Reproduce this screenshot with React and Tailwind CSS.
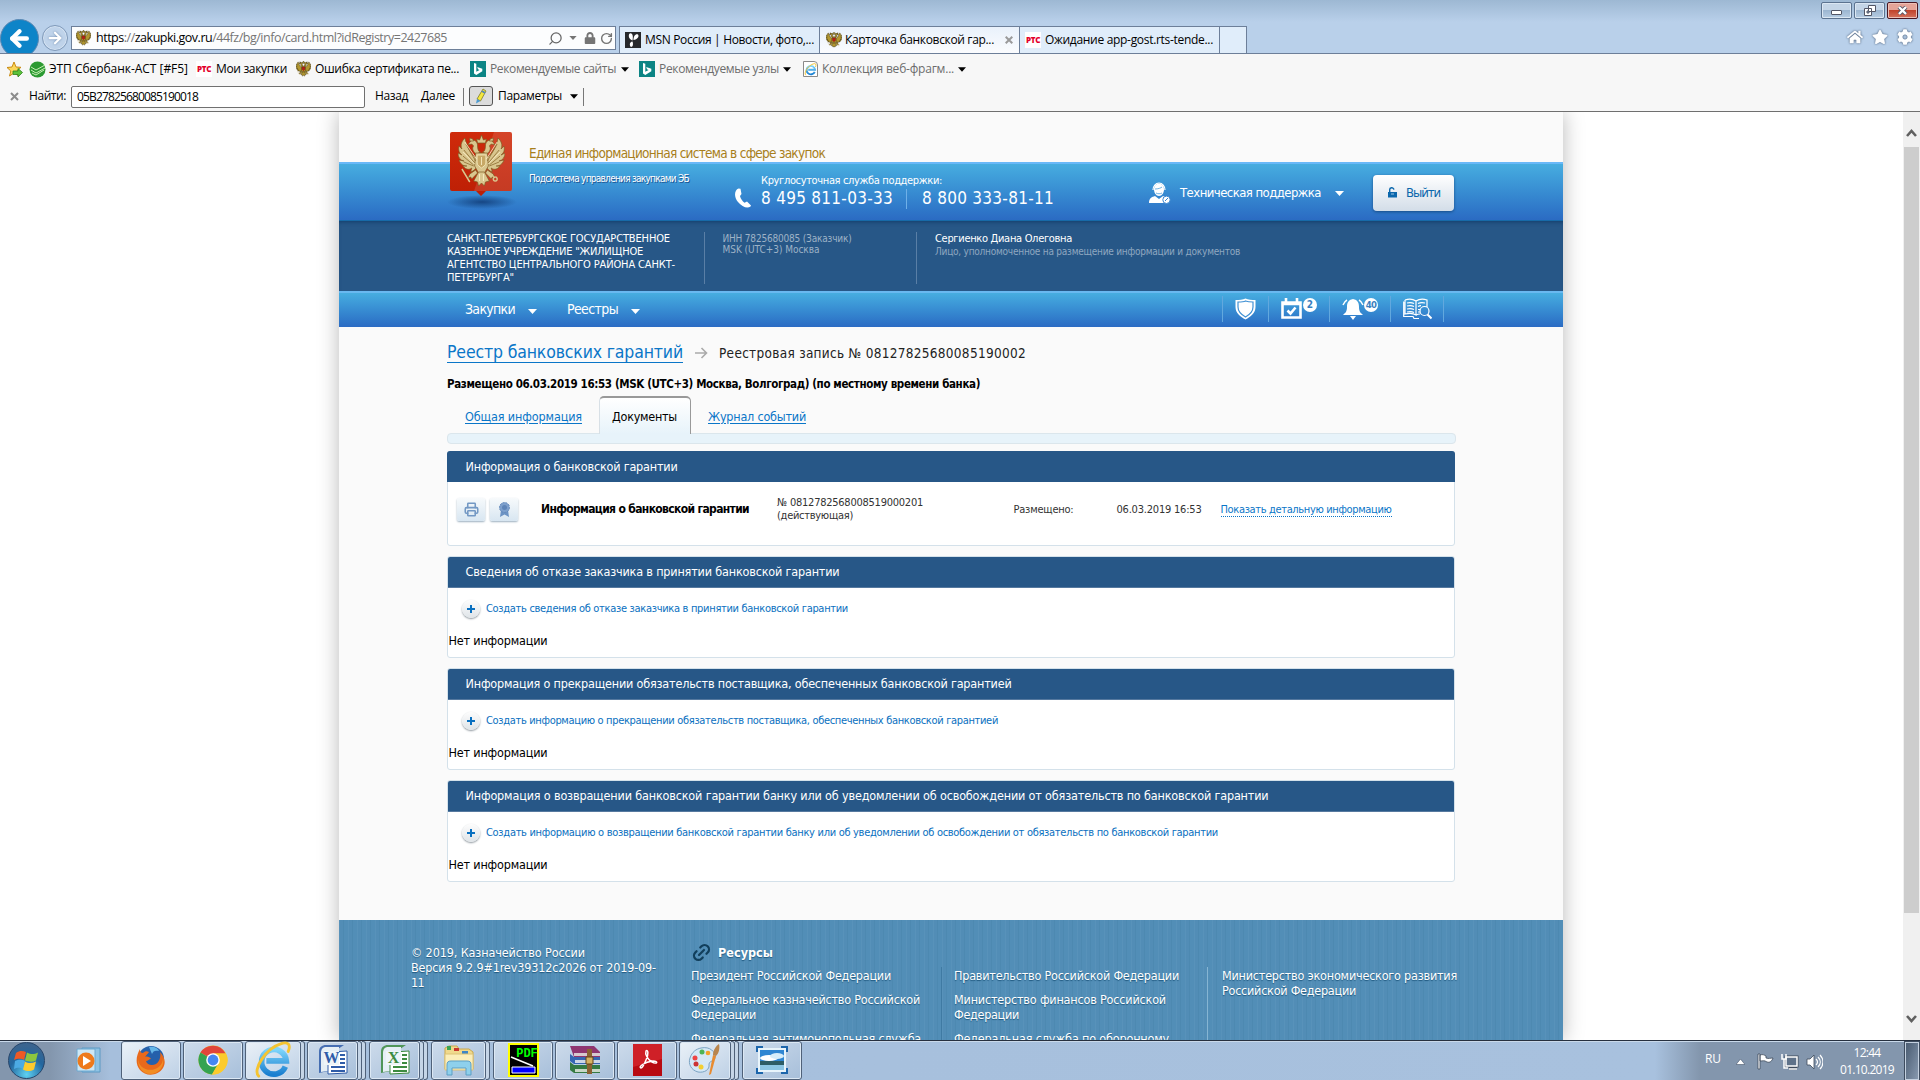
import { useLayoutEffect, useRef } from "react";
import { ArrowLeft, ArrowRight, Link2, Printer, RotateCw, Search } from "lucide-react";
import { FaCog, FaHome, FaStar, FaLock } from "react-icons/fa";

// One line of text, tracked so that it takes exactly w pixels
function T({ w, className = "", children }) {
  const ref = useRef(null);
  useLayoutEffect(() => {
    const el = ref.current;
    el.style.letterSpacing = "0px";
    const natural = el.getBoundingClientRect().width;
    el.style.letterSpacing = `${(w - natural) / el.textContent.length}px`;
  }, [w]);
  return (
    <span className={`block shrink-0 whitespace-nowrap ${className}`} style={{ width: w }}>
      <span ref={ref} className="inline-block">{children}</span>
    </span>
  );
}

function Caret({ className = "" }) {
  return <svg className={`shrink-0 ${className}`} width="9" height="5" viewBox="0 0 9 5" fill="currentColor"><path d="M0 0h9L4.500 5z" /></svg>;
}

const WING = "M20 24C15 21 10 15 7 3 4 6 2 10 4 14L1 11C0 15 1 18 4 20L0 18C0 22 2 25 6 26L1 25C3 30 6 31 9 31L5 31C8 35 12 35 14 33L13 37C16 36 18 34 20 31z";
const HEAD = "M23 17C21 17 20 14 20 11 20 6 16 4 13 6L10 10 14 9 16 11C14 13 15 17 19 19z";

function Eagle({ width = 15, height = 16, className = "" }) {
  const small = width < 20;
  return (
    <svg width={width} height={height} viewBox="0 0 48 54" preserveAspectRatio="none" className={`shrink-0 ${className}`}>
      <g fill={small ? "#b3982f" : "#d9c68e"} stroke={small ? "#4b3c10" : "#7d5a22"} strokeWidth={small ? 1.6 : 0.7} strokeLinejoin="round">
        <path d={WING} />
        <path d={WING} transform="matrix(-1 0 0 1 48 0)" />
        <path d={HEAD} />
        <path d={HEAD} transform="matrix(-1 0 0 1 48 0)" />
        <path d="M18 18h12l1 13-4 7h-6l-4-7z" />
        <path d="M21 37l-5 9 4 1 1 4 3-3 3 3 1-4 4-1-5-9z" />
        <path d="M18 35l-6 4-2 4 3-1 1 2 6-6zM30 35l6 4 2 4-3-1-1 2-6-6z" />
        <path d="M20 8l-1-4 3 1 2-5 2 5 3-1-1 4zM12 6l0-3 3 1 1 2zM36 6l0-3-3 1-1 2z" />
        <path d="M4 34l8 13M38 42a2 2 0 1 0 .1 0" fill="none" strokeWidth="1.500" stroke="#d9c68e" />
      </g>
      <path d="M19.500 20h9v8c0 2-3 4-4.500 5-1.500-1-4.500-3-4.500-5z" fill={small ? "#b3201a" : "#c7a866"} stroke={small ? "#7d120e" : "#f0e3b4"} />
      {!small && (
        <g fill="none" strokeWidth=".8">
          <path d="M8 9l10 17M6 15l11 13M5 21l11 9M6 27l10 4M40 9L30 26M42 15L31 28M43 21l-11 9M42 27l-10 4" stroke="#8b6a2f" />
          <path d="M7 7l12 17M5 17l12 12M40 7L29 24M43 17L31 29M22 39v7M26 39v7M24 22v8" stroke="#fff4cd" />
        </g>
      )}
    </svg>
  );
}

function Rts() {
  return <span className="flex h-4 w-4 shrink-0 items-center justify-center bg-white text-[8px] font-extrabold leading-none tracking-[-0.3px] text-[#e4002b]">РТС</span>;
}

function Bing() {
  return (
    <svg width="16" height="16" viewBox="0 0 16 16" className="shrink-0">
      <path d="M0 0h16v16H0z" fill="#0c8484" />
      <path d="M4 2l2.300.8v8L9.600 9 8 8.200 7.200 6 12.300 7.800v2.500L6.300 14 4 12.500z" fill="#fff" />
    </svg>
  );
}

function IELogo({ size }) {
  return (
    <svg width={size} height={size} viewBox="0 0 40 40" className="shrink-0">
      <defs>
        <linearGradient id="ie" x1="0" y1="0" x2="0" y2="1"><stop offset="0" stopColor="#7fd6fb" /><stop offset="1" stopColor="#1a7fd0" /></linearGradient>
      </defs>
      <path d="M33 27a13 13 0 1 1 1-6H13" fill="none" stroke="url(#ie)" strokeWidth="6" />
      <path d="M5 37C-2 31 12 8 28 3c8-3 11 1 8 8" fill="none" stroke="#f5c431" strokeWidth="3" strokeLinecap="round" />
    </svg>
  );
}

function TopBar() {
  return (
    <div className="flex h-[54px] shrink-0 border-b border-[#6d7f99] bg-[linear-gradient(#9db8d3_0px,#b9d0ea_22px)]">
      <div className="flex h-[53px] w-[71px] shrink-0 overflow-hidden pt-[19px]">
        <div className="flex h-[39px] w-[39px] shrink-0 items-center justify-center rounded-full border border-[#5c88b3] bg-[#0d84c8] text-white">
          <ArrowLeft size={25} strokeWidth={4.2} />
        </div>
        <div className="ml-[3px] mt-[6px] flex h-[26px] w-[26px] shrink-0 items-center justify-center rounded-full border border-[#7f99b9] bg-[#bfd3ea] text-white shadow-[inset_0_0_0_1px_#d5e3f2]">
          <ArrowRight size={18} strokeWidth={3} className="[filter:drop-shadow(0_0_1px_#6e8bb0)]" />
        </div>
      </div>
      <div className="mt-[26px] flex h-6 w-[545px] shrink-0 items-center border border-[#6d7f99] bg-[#fcfdfe] pl-1 text-[12.5px] text-[#757575]">
        <Eagle />
        <T w={351} className="ml-[5px]"><span className="text-black">https</span>://<span className="text-black">zakupki.gov.ru</span>/44fz/bg/info/card.html?idRegistry=2427685</T>
        <Search size={15} strokeWidth={2} className="ml-[101px] -scale-x-100 text-[#666]" />
        <Caret className="ml-[6px] h-1 w-2" />
        <FaLock size={12} className="ml-[7px]" />
        <RotateCw size={13} strokeWidth={2.6} className="ml-[4px]" />
      </div>
      <div className="ml-[3px] mt-[26px] flex h-[27px] border-l border-t border-[#6d7f99] bg-[#e0edfa] text-[12px] text-black">
        <div className="flex w-[200px] items-center border-r border-[#6d7f99] pl-[5px]">
          <svg width="16" height="16" viewBox="0 0 16 16"><path d="M0 0h16v16H0z" fill="#26282b" /><path d="M7.500 8.500C3 7 3 1.500 5.500 1.200 8 1.500 8.300 5 7.500 8.500zM8.500 8c0-4 2-6.500 4.500-5.500 1.500 2-.5 5-4.500 5.500zM7.500 9.500C4 10 4.500 14 6 15c2 0 2.500-3 1.500-5.500z" fill="#fff" /></svg>
          <T w={169} className="ml-1">MSN Россия | Новости, фото,...</T>
        </div>
        <div className="flex w-[200px] items-center border-r border-[#6d7f99] bg-linear-to-b from-[#e9f1fb] to-[#fbfcfe] pl-[6px]">
          <Eagle width={16} />
          <T w={149} className="ml-[3px]">Карточка банковской гар...</T>
          <svg width="8" height="8" viewBox="0 0 8 8" className="ml-[11px]" stroke="#9a9a9a" strokeWidth="2"><path d="M.7.7l6.600 6.600M7.300.7L.7 7.300" /></svg>
        </div>
        <div className="flex w-[200px] items-center border-r border-[#6d7f99] pl-[5px]">
          <Rts />
          <T w={168} className="ml-1">Ожидание app-gost.rts-tende...</T>
        </div>
        <div className="w-[27px] border-r border-[#6d7f99]" />
      </div>
      <div className="ml-auto flex flex-col items-end pr-[2px] pt-[2px]">
        <div className="flex gap-[2px]">
          <div className="flex h-[17px] w-[31px] items-center justify-center rounded-[2px] border border-[#5c7390] bg-[linear-gradient(#c4d5e7_50%,#9cb6d1_50%,#b7cde3)] shadow-[inset_0_0_0_1px_#dbe7f3]">
            <span className="mt-1 h-[5px] w-[11px] rounded-[1px] border border-[#535666] bg-white" />
          </div>
          <div className="flex h-[17px] w-[31px] items-center justify-center rounded-[2px] border border-[#5c7390] bg-[linear-gradient(#c4d5e7_50%,#9cb6d1_50%,#b7cde3)] shadow-[inset_0_0_0_1px_#dbe7f3]">
            <svg width="12" height="11" viewBox="0 0 12 11" fill="#fff" stroke="#535666"><path d="M4.500.5h7v6h-7zM.5 3.500h7v7h-7z" /><path d="M3 6h2v2H3z" fill="#8ea8c5" /></svg>
          </div>
          <div className="flex h-[17px] w-[31px] items-center justify-center rounded-[2px] border border-[#4a1722] bg-[linear-gradient(#e5a498_50%,#c1442c_50%,#d4735e)] shadow-[inset_0_0_0_1px_#ecc0b6]">
            <svg width="11" height="9" viewBox="0 0 11 9"><path d="M2 1l7 7M9 1L2 8" stroke="#535666" strokeWidth="4" /><path d="M2 1l7 7M9 1L2 8" stroke="#fff" strokeWidth="2.400" /></svg>
          </div>
        </div>
        <div className="mr-[5px] mt-[10px] flex gap-[9px] text-white">
          <FaHome size={16} className="[filter:drop-shadow(0_0_1px_#3f536d)]" />
          <FaStar size={16} className="[filter:drop-shadow(0_0_1px_#3f536d)]" />
          <FaCog size={16} className="[filter:drop-shadow(0_0_1px_#3f536d)]" />
        </div>
      </div>
    </div>
  );
}

function Toolbars() {
  return (
    <div className="flex h-[58px] shrink-0 flex-col border-b border-[#6f6f6f] bg-[#f7f7f7] text-[12px] text-black">
      <div className="flex h-[30px] items-center pl-[6px]">
        <svg width="17" height="17" viewBox="0 0 17 17"><path d="M8 1l2 5 5 .3-4 3.500 1.500 5L8 12l-4.500 3 1.300-5L1 6.500 6 6z" fill="#fbd75a" stroke="#c98a13" /><path d="M7 10h5V7.500l4.500 4L12 16v-2.500H7z" fill="#5cc23a" stroke="#2d8420" strokeWidth=".8" /></svg>
        <svg width="17" height="17" viewBox="0 0 17 17" className="ml-[6px]"><circle cx="8.500" cy="8.500" r="8" fill="#2c9a32" /><path d="M2 6l5 3 9-5M2 9l5 3 9-5M3 12l4 2 8-5" stroke="#c9efb5" strokeWidth="1" fill="none" /></svg>
        <T w={139} className="ml-[3px]">ЭТП Сбербанк-АСТ [#F5]</T>
        <span className="ml-[8px]"><Rts /></span>
        <T w={71} className="ml-1">Мои закупки</T>
        <Eagle className="ml-[9px]" />
        <T w={144} className="ml-1">Ошибка сертификата пе...</T>
        <span className="ml-[11px]"><Bing /></span>
        <T w={126} className="ml-1 text-[#6d6d6d]">Рекомендуемые сайты</T>
        <Caret className="ml-[5px] w-2" />
        <span className="ml-[10px]"><Bing /></span>
        <T w={120} className="ml-1 text-[#6d6d6d]">Рекомендуемые узлы</T>
        <Caret className="ml-[4px] w-2" />
        <span className="ml-3 flex h-4 w-[15px] items-center rounded-tr-[4px] border border-[#8a8a8a] bg-white"><IELogo size={13} /></span>
        <T w={132} className="ml-1 text-[#6d6d6d]">Коллекция веб-фрагм...</T>
        <Caret className="ml-[4px] w-2" />
      </div>
      <div className="flex h-[25px] items-center pl-[10px]">
        <svg width="9" height="9" viewBox="0 0 9 9" stroke="#8c8c8c" strokeWidth="2"><path d="M1 1l7 7M8 1L1 8" /></svg>
        <T w={37} className="-mt-px ml-[10px]">Найти:</T>
        <div className="ml-[5px] flex h-[22px] w-[294px] items-center rounded-[2px] border border-[#707070] bg-white pl-[5px]">
          <T w={121}>05B27825680085190018</T>
        </div>
        <T w={33} className="-mt-px ml-[10px]">Назад</T>
        <T w={34} className="-mt-px ml-[13px]">Далее</T>
        <span className="ml-[8px] h-[18px] w-px bg-[#777]" />
        <span className="-mt-px ml-[5px] flex h-5 w-6 items-center justify-center rounded-[3px] border border-[#555] bg-[#dcdcdc]">
          <svg width="14" height="16" viewBox="0 0 14 16"><path d="M3 11L9 1l3 2-5.500 10z" fill="#f4e83c" stroke="#7f7a2a" strokeWidth=".8" /><path d="M3 11l3.500 2L2 15.500z" fill="#4e9bd0" /><path d="M8 3l3 2" stroke="#5689b5" strokeWidth="2" /></svg>
        </span>
        <T w={64} className="-mt-px ml-[5px]">Параметры</T>
        <Caret className="ml-[8px] w-2" />
        <span className="ml-[5px] h-[18px] w-px bg-[#777]" />
      </div>
    </div>
  );
}

function SiteHeader() {
  return (
    <header className="relative shrink-0 text-white">
      <div className="h-[50px] pl-[190px] pt-[32.5px]">
        <T w={296} className="text-[13.5px] leading-4 text-[#a87f1b]">Единая информационная система в сфере закупок</T>
      </div>
      <svg width="72" height="78" viewBox="0 0 72 78" className="absolute left-[106px] top-[20px]">
        <defs>
          <radialGradient id="shade"><stop offset="0" stopColor="#164684" /><stop offset="1" stopColor="#164684" stopOpacity="0" /></radialGradient>
          <linearGradient id="red" x1="0" y1="0" x2="0" y2="1"><stop offset="0" stopColor="#cf2b0b" /><stop offset="1" stopColor="#bd1f05" /></linearGradient>
        </defs>
        <ellipse cx="37" cy="70" rx="35" ry="7" fill="url(#shade)" />
        <path d="M7 0h58a2 2 0 0 1 2 2v55a2 2 0 0 1-2 2H41l-5 5-5-5H7a2 2 0 0 1-2-2V2a2 2 0 0 1 2-2z" fill="url(#red)" />
        <path d="M49 0h16a2 2 0 0 1 2 2v55a2 2 0 0 1-2 2H29z" fill="#fff" opacity=".12" />
        <svg x="13" y="3" width="47" height="54"><Eagle width={47} height={54} /></svg>
      </svg>
      <div className="flex h-[58px] border-t-2 border-[#69b8f8] bg-linear-to-b from-[#47ade0] to-[#2b6bc3] pl-[190px]">
        <T w={160} className="mt-[9px] text-[10px] leading-3 [text-shadow:1px_1px_0_#1d5795]">Подсистема управления закупками ЭБ</T>
        <svg width="18" height="20" viewBox="0 0 18 20" className="ml-[45px] mt-[24px] shrink-0" fill="#fff"><path d="M4.500.5C.5 2 -.5 8.500 4 14c4 5 9.500 7 12.500 4.500l.5-1-4-4-2.500 1.200C8.500 13.500 6.500 10.500 6 8L7.500 6 6.500.8z" /></svg>
        <div className="ml-[9px] mt-[9.5px]">
          <T w={181} className="text-[11px] leading-[14px]">Круглосуточная служба поддержки:</T>
          <div className="flex h-[23px] items-center text-[17px]">
            <T w={132}>8 495 811-03-33</T>
            <span className="ml-[13px] h-5 w-px bg-[#6fb0e8]" />
            <T w={132} className="ml-[15px]">8 800 333-81-11</T>
          </div>
        </div>
        <div className="ml-[95px] flex h-[57px] items-center">
          <svg width="22" height="22" viewBox="0 0 22 22" fill="#fff"><path d="M5 7a5 5.500 0 0 1 10 0c0 4-2 7-5 7s-5-3-5-7z" /><path d="M4 8a6 7 0 0 1 12 0" fill="none" stroke="#fff" strokeWidth="1.200" /><path d="M6 7c3 0 6-1 7-2M7 11c2 1 4 1 6 0" stroke="#4a9ddb" fill="none" strokeWidth=".8" /><path d="M0 21c0-5 3-6 6-7l4 3 4-3c3 1 4 2 5 4v3z" /><circle cx="17.500" cy="17.800" r="3.700" stroke="#3a86cf" /><path d="M16 19l3-3" stroke="#3a86cf" /></svg>
          <T w={141} className="ml-[9px] text-[13px]">Техническая поддержка</T>
          <Caret className="ml-[14px] mt-[2px]" />
          <div className="ml-[29px] flex h-[36px] w-[81px] items-center rounded-[4px] bg-linear-to-b from-white to-[#d3dde8] pl-[15px] text-[#0b67ac] shadow-[0_1px_3px_#174d86]">
            <svg width="9" height="11" viewBox="0 0 9 11"><path d="M0 5h9v5.500H0z" fill="#0b67ac" /><path d="M1.700 5V3.200a2 2 0 0 1 4.200-.6" fill="none" stroke="#0b67ac" strokeWidth="1.400" /><path d="M3 7h3" stroke="#9cc4e2" /></svg>
            <T w={34} className="ml-[9px] text-[13px]">Выйти</T>
          </div>
        </div>
      </div>
      <div className="flex h-[71px] border-t border-[#176aa8] bg-[#275787] pl-[108px] pt-[11px] text-[11px] leading-[13px] shadow-[inset_0_3px_4px_-2px_#123d6b]">
        <div className="w-[257px]">
          <T w={223}>САНКТ-ПЕТЕРБУРГСКОЕ ГОСУДАРСТВЕННОЕ</T>
          <T w={196}>КАЗЕННОЕ УЧРЕЖДЕНИЕ "ЖИЛИЩНОЕ</T>
          <T w={228}>АГЕНТСТВО ЦЕНТРАЛЬНОГО РАЙОНА САНКТ-</T>
          <T w={67}>ПЕТЕРБУРГА"</T>
        </div>
        <div className="h-[52px] w-[212px] border-l border-[#5a7fa6] pl-[17.5px] pt-[1px] text-[10px] leading-[11px] text-[#9db2c6]">
          <T w={129}>ИНН 7825680085 (Заказчик)</T>
          <T w={97}>MSK (UTC+3) Москва</T>
        </div>
        <div className="h-[52px] border-l border-[#5a7fa6] pl-[18px]">
          <T w={137}>Сергиенко Диана Олеговна</T>
          <T w={305} className="text-[10px] text-[#8fa7c0]">Лицо, уполномоченное на размещение информации и документов</T>
        </div>
      </div>
      <nav className="flex h-[36px] items-center border-t-2 border-[#69b8f0] bg-linear-to-b from-[#47ade0] to-[#2b6bc3] pb-[2px] pl-[126px] text-[14px]">
        <T w={50}>Закупки</T>
        <Caret className="ml-[13px] mt-[4px]" />
        <T w={51} className="ml-[30px]">Реестры</T>
        <Caret className="ml-[13px] mt-[4px]" />
        <div className="ml-auto mr-[119px] flex h-[26px] divide-x divide-[#62a8de] border-x border-[#62a8de]">
          <div className="flex w-[46px] items-center justify-center">
            <svg width="21" height="22" viewBox="0 0 21 22"><path d="M10.500.5C13 2 17 2 20.500 2v7c0 6-5 10-10 12.500C5.500 19 .5 15 .5 9V2c3.500 0 7.500 0 10-1.500z" fill="#fff" /><path d="M10.500 3C13 4 16 4 18 4v5c0 5-4 8-7.500 10C7 17 3 14 3 9V4c2.500 0 5.500 0 7.500-1z" fill="#fff" stroke="#4191d4" strokeWidth="1.200" /></svg>
          </div>
          <div className="flex w-[61px] pl-[12px] pt-[2px]">
            <svg width="21" height="21" viewBox="0 0 21 21" fill="none" stroke="#fff" strokeWidth="2.600"><path d="M1.500 4.500h18v15h-18z" /><path d="M1 6h19M5 0v6M16 0v6M6.500 12.500l3 3 5-6" /></svg>
            <span className="ml-[1px] flex h-[14px] w-[14px] items-center justify-center rounded-full bg-white text-[10px] font-bold leading-none text-[#3b7fc0]">2</span>
          </div>
          <div className="flex w-[61px] pl-[12px] pt-[2px]">
            <svg width="22" height="22" viewBox="0 0 22 22" fill="#fff"><path d="M11 1c-5 1-6 4-6 8 0 5-2 6-4 8h20c-2-2-4-3-4-8 0-4-1-7-6-8zM8 18h6l-3 4z" /><path d="M5 2C3 3 2 5 1 7M17 2c2 1 3 3 4 5" fill="none" stroke="#fff" strokeWidth="1.500" /></svg>
            <span className="flex h-[14px] w-[14px] items-center justify-center rounded-full bg-white text-[9.5px] font-bold leading-none tracking-[-0.8px] text-[#3b7fc0]">40</span>
          </div>
          <div className="flex w-[52px] items-center justify-center">
            <svg width="29" height="22" viewBox="0 0 29 22" fill="none" stroke="#fff" strokeWidth="1.200"><path d="M2 2c4-1.500 8-1 11 1 3-2 7-2.500 11-1v7M2 2v14c4-1 8-1 11 1V3M13 17c1-.5 3-1 4-1M1 4H.7v14.500H10l1 2h5M4 5c3-.8 5-.5 7 .5M4 8c3-.8 5-.5 7 .5M4 11c3-.8 5-.5 7 .5M4 14c3-.8 5-.5 7 .5M15 5.500c2-1 4-1.300 7-.5M15 8.500c1-.5 2-.8 3-.8M15 11.500h2M15 14h2" /><circle cx="21.500" cy="13" r="4.500" /><path d="M24.500 16.500l4 4" strokeWidth="2" /></svg>
          </div>
        </div>
      </nav>
    </header>
  );
}

const sections = [
  { title: "Сведения об отказе заказчика в принятии банковской гарантии", titleW: 374, link: "Создать сведения об отказе заказчика в принятии банковской гарантии", linkW: 362 },
  { title: "Информация о прекращении обязательств поставщика, обеспеченных банковской гарантией", titleW: 546, link: "Создать информацию о прекращении обязательств поставщика, обеспеченных банковской гарантией", linkW: 512 },
  { title: "Информация о возвращении банковской гарантии банку или об уведомлении об освобождении от обязательств по банковской гарантии", titleW: 803, link: "Создать информацию о возвращении банковской гарантии банку или об уведомлении об освобождении от обязательств по банковской гарантии", linkW: 732 },
];

function Section({ title, titleW, link, linkW }) {
  return (
    <section className="mt-[10px] h-[102px] overflow-hidden rounded-[3px] border border-[#d4e1ea] bg-white">
      <div className="-mx-px -mt-px flex h-8 items-center border-y border-[#56799f] bg-[#275787] pl-[18.5px] pt-px text-[12.5px] text-white">
        <T w={titleW}>{title}</T>
      </div>
      <div className="mt-[12px] flex h-5 pl-[14px]">
        <span className="flex h-[18px] w-[18px] items-center justify-center rounded-full bg-linear-to-b from-[#fdfdfd] to-[#dfe4e8] shadow-[0_1px_2px_#8b949b]">
          <svg width="8" height="8" viewBox="0 0 8 8" stroke="#0a70c0" strokeWidth="2"><path d="M4 0v8M0 4h8" /></svg>
        </span>
        <T w={linkW} className="ml-[6px] text-[11px] leading-[17px] text-[#0a70c0]">{link}</T>
      </div>
      <T w={99} className="ml-[0.5px] mt-[13px] text-[12.5px] leading-4 text-black">Нет информации</T>
    </section>
  );
}

function Content() {
  return (
    <main className="mx-[108px] h-[593px] shrink-0 text-black">
      <div className="flex h-[50px] items-center pt-[2px]">
        <T w={236} className="border-b border-[#0a76c8] text-[17.5px] leading-[19px] text-[#0a76c8]">Реестр банковских гарантий</T>
        <svg width="13" height="12" viewBox="0 0 13 12" className="ml-[12px]" fill="none" stroke="#aaa" strokeWidth="1.600"><path d="M0 6h11M6.500 1l5 5-5 5" /></svg>
        <T w={307} className="ml-[11px] text-[13.5px] text-[#222]">Реестровая запись № 08127825680085190002</T>
      </div>
      <T w={533} className="-mt-px text-[11.5px] font-bold leading-4">Размещено 06.03.2019 16:53 (MSK (UTC+3) Москва, Волгоград) (по местному времени банка)</T>
      <div className="mt-[4px] flex h-[36px] pl-[18px] text-[12.5px] leading-[16px]">
        <T w={117} className="mt-[13px] text-[#0a76c8] [&>span]:underline [&>span]:underline-offset-2">Общая информация</T>
        <div className="-mb-px ml-[17px] h-[38px] w-[92px] rounded-t-[5px] border-x border-t-2 border-[#999] border-l-[#d8e0e6] bg-linear-to-b from-white to-[#e7f3fa] pl-[12px] pt-[11px]">
          <T w={65}>Документы</T>
        </div>
        <T w={98} className="ml-[17px] mt-[13px] text-[#0a76c8] [&>span]:underline [&>span]:underline-offset-2">Журнал событий</T>
      </div>
      <div className="mt-px -mr-px h-[11px] rounded-[4px] border border-[#dbe6ec] bg-[#e7f3fa]" />
      <section className="mt-[7px] h-[95px] rounded-[3px] border border-[#d4e1ea] bg-white">
        <div className="-mx-px -mt-px flex h-[31px] items-center rounded-t-[3px] bg-[#275787] pl-[18.5px] pt-[2px] text-[12.5px] text-white">
          <T w={212}>Информация о банковской гарантии</T>
        </div>
        <div className="flex h-[54px] items-center pl-[9px] text-[11px] leading-[13px] text-[#333]">
          <span className="flex h-[23px] w-7 items-center justify-center rounded-[2px] bg-linear-to-b from-[#f7fafc] to-[#d8e6f1] text-[#7398c4] shadow-[0_1px_2px_#9db0bf]"><Printer size={15} strokeWidth={2.5} /></span>
          <span className="ml-[5px] flex h-[23px] w-7 items-center justify-center rounded-[2px] bg-linear-to-b from-[#f7fafc] to-[#d8e6f1] shadow-[0_1px_2px_#9db0bf]">
            <svg width="13" height="15" viewBox="0 0 13 15"><path d="M3 8h7l1 7-4.500-2.500L2 15z" fill="#6c93c4" /><circle cx="6.500" cy="5.500" r="5" fill="#7c9fcc" stroke="#6288bb" strokeDasharray="2 1" /><circle cx="6.500" cy="5.500" r="2.500" fill="#5d84b8" /></svg>
          </span>
          <T w={208} className="ml-[23px] text-[12px] font-bold text-black">Информация о банковской гарантии</T>
          <div className="ml-[28px] w-[236px]">
            <T w={146}>№ 0812782568008519000201</T>
            <T w={76}>(действующая)</T>
          </div>
          <T w={60} className="ml-[0.5px]">Размещено:</T>
          <T w={85} className="ml-[43px]">06.03.2019 16:53</T>
          <T w={171} className="-mb-px ml-[19px] border-b border-dotted border-[#0a76c8] text-[#0a76c8]">Показать детальную информацию</T>
        </div>
      </section>
      {sections.map((s) => <Section key={s.title} {...s} />)}
    </main>
  );
}

const resources = [
  [[["Президент Российской Федерации", 200]], [["Федеральное казначейство Российской", 229], ["Федерации", 65]], [["Федеральная антимонопольная служба", 230]]],
  [[["Правительство Российской Федерации", 225]], [["Министерство финансов Российской", 212], ["Федерации", 65]], [["Федеральная служба по оборонному", 215]]],
  [[["Министерство экономического развития", 235], ["Российской Федерации", 134]]],
];

function Footer() {
  return (
    <footer className="flex h-[120px] shrink-0 overflow-hidden bg-[repeating-linear-gradient(90deg,#5892ba_0px,#5892ba_1px,#528db6_1px,#528db6_4px,#4d89b1_4px,#4d89b1_5px,#528eb7_5px,#528eb7_9px)] pl-[72px] pt-[25px] text-[12.5px] leading-[15px] text-white [text-shadow:0_1px_1px_#1f587f]">
      <div className="w-[280px] shrink-0">
        <T w={174}>© 2019, Казначейство России</T>
        <T w={245}>Версия 9.2.9#1rev39312c2026 от 2019-09-</T>
        <T w={13}>11</T>
      </div>
      <div>
        <div className="flex h-[15px] items-center">
          <Link2 size={21} strokeWidth={2.6} className="-rotate-45 text-[#123f5c]" />
          <T w={55} className="ml-[6px] font-bold">Ресурсы</T>
        </div>
        <div className="mt-[7px] flex">
          {resources.map((col, i) => (
            <div key={i} className={i === 0 ? "w-[250px] shrink-0" : i === 1 ? "w-[266px] shrink-0 border-l border-[#3f7aa3] pl-[12px]" : "w-[260px] shrink-0 border-l border-[#86b5d3] pl-[14px]"}>
              {col.map((item, j) => (
                <div key={j} className="mb-[9px] first:mt-px">
                  {item.map(([text, w]) => <T key={text} w={w}>{text}</T>)}
                </div>
              ))}
            </div>
          ))}
        </div>
      </div>
    </footer>
  );
}

function Scrollbar() {
  return (
    <div className="ml-auto flex w-[17px] shrink-0 flex-col items-center bg-[#f0f0f0]">
      <svg width="11" height="8" viewBox="0 0 11 8" className="mt-[17px]" fill="none" stroke="#606060" strokeWidth="2.600"><path d="M1 7l4.500-5L10 7" /></svg>
      <div className="mt-[10px] h-[766px] w-[15px] bg-[#cdcdcd]" />
      <svg width="11" height="8" viewBox="0 0 11 8" className="mt-auto mb-[17px]" fill="none" stroke="#606060" strokeWidth="2.600"><path d="M1 1l4.500 5L10 1" /></svg>
    </div>
  );
}

function OfficeIcon({ letter, color }) {
  return (
    <svg width="32" height="34" viewBox="0 0 32 34">
      <path d="M2 30V9c0-5 3-7 7-7h18l-6 4v20z" fill={color} opacity=".85" />
      <path d="M4 29V10c0-4 2-6 5-6h13v22z" fill="#e6eff5" />
      <path d="M15 9l15-1v22l-19 1V20z" fill="#fff" stroke={color} strokeWidth="1" />
      <path d="M23 12h5M23 16h5M23 20h5M14 24h14M14 28h14" stroke={color} strokeWidth="2" />
      <path d="M7 8h15v14H7z" fill="#eef5f8" />
      <text x="14.500" y="20" textAnchor="middle" fontFamily="Liberation Serif" fontWeight="bold" fontSize="16" fill={color}>{letter}</text>
    </svg>
  );
}

const apps = [
  // [left margin, width, stacked windows behind, highlighted, icon]
  [0, 60, 0, true, "firefox"],
  [2, 60, 0, false, "chrome"],
  [2, 56, 1, true, "ie"],
  [2, 51, 2, false, "word"],
  [3, 51, 2, false, "excel"],
  [3, 55, 1, false, "folder"],
  [3, 60, 0, false, "pdf"],
  [2, 60, 0, false, "rar"],
  [2, 60, 0, false, "acrobat"],
  [2, 52, 2, true, "paint"],
  [3, 60, 0, false, "photo"],
];

function AppIcon({ name }) {
  if (name === "firefox") return (
    <svg width="32" height="32" viewBox="0 0 32 32"><circle cx="16" cy="15" r="13" fill="#2460ab" /><path d="M14 3c5-1 9 1 10 4-4-1-6 0-7 3z" fill="#64b6e8" /><path d="M5 5c0 3 1 4 3 4 2-2 4-2 6-1-1 2-3 3-4 5 2-1 5 0 6 2-2 0-3 2-5 2 1 4 6 5 10 3 4-3 5-8 4-12 5 5 6 11 3 16-5 8-17 9-23 2C0 20 1 12 5 5z" fill="#e8691b" /><path d="M3 14c0 9 9 14 17 11 5-2 8-6 8-11 2 8-4 16-13 16C8 30 2 23 3 14z" fill="#f6a52b" opacity=".6" /></svg>
  );
  if (name === "chrome") return (
    <svg width="30" height="30" viewBox="0 0 30 30"><circle cx="15" cy="15" r="14.500" fill="#fbcb2d" /><path d="M15 15L2.500 7.500A14.500 14.500 0 0 1 27.600 8.500H15z" fill="#e0453a" /><path d="M15 15l5 4-6 10.500A14.500 14.500 0 0 1 2.500 7.500z" fill="#34a350" /><path d="M15 8.500h13A14.500 14.500 0 0 1 14 29.500l6.500-11z" fill="#fbcb2d" /><circle cx="15" cy="15" r="6.800" fill="#fff" /><circle cx="15" cy="15" r="5.400" fill="#4587f2" /></svg>
  );
  if (name === "ie") return <IELogo size={38} />;
  if (name === "word") return <OfficeIcon letter="W" color="#2f5ca8" />;
  if (name === "excel") return <OfficeIcon letter="X" color="#3d8b40" />;
  if (name === "folder") return (
    <svg width="34" height="34" viewBox="0 0 34 34"><path d="M3 5l4-2h8l2 3h10l4 3v17H3z" fill="#f0d98c" stroke="#c9a84e" /><path d="M5 3h4v4H5z" fill="#3aa655" /><path d="M12 5h5v3h-5z" fill="#c8372d" /><path d="M20 8h6v3h-6z" fill="#3d86c6" /><path d="M3 11h28v16H3z" fill="#fbeeb9" stroke="#dcc277" /><path d="M5 32V22c0-3 1-4 4-4h16c3 0 4 1 4 4v10h-5v-7H10v7z" fill="#8ed0ec" stroke="#5d9fc5" /></svg>
  );
  if (name === "pdf") return (
    <svg width="31" height="34" viewBox="0 0 31 34"><path d="M1 1h29v32H1z" fill="#000" stroke="#ff0" strokeWidth="2" /><text x="19" y="14" textAnchor="middle" fontFamily="Liberation Mono" fontWeight="bold" fontSize="12" fill="#0f0">PDF</text><path d="M3 14l22 9" stroke="#fff" strokeWidth="1.500" /><path d="M4 24h23v6H4z" fill="#00f" stroke="#fff" /></svg>
  );
  if (name === "rar") return (
    <svg width="34" height="30" viewBox="0 0 34 30"><path d="M2 1h24l6 6v5H6z" fill="#8f3570" /><path d="M6 8h26v3H6z" fill="#d7c9cf" /><path d="M2 9l4 3h26v7H6l-4-3z" fill="#3566b2" /><path d="M7 15h25v3H7z" fill="#cdd6e5" /><path d="M2 17l4 3h26v8H6l-4-3z" fill="#357a42" /><path d="M7 24h25v3H7z" fill="#c7d7c6" /><path d="M19 4h5v25h-5z" fill="#8a6232" /><path d="M18 12h7v7h-7z" fill="#d5b163" stroke="#654315" /></svg>
  );
  if (name === "acrobat") return (
    <svg width="29" height="32" viewBox="0 0 29 32"><path d="M0 0h29v32H0z" fill="#b80a11" /><path d="M0 0h29v15L0 23z" fill="#cf2027" /><path d="M8 24c-3-1 3-6 12-7 6 0 4 4-1 1-5-3-7-8-6-11 2-2 3 3 0 9-2 5-4 8-5 8z" fill="none" stroke="#fff" strokeWidth="1.500" /></svg>
  );
  if (name === "paint") return (
    <svg width="34" height="34" viewBox="0 0 34 34"><path d="M13 5c9-2 15 4 14 10-1 4-5 2-6 6 1 6-5 9-11 8C3 27 0 21 2 15 4 9 8 6 13 5z" fill="#d5e8f6" stroke="#7ba3c3" /><circle cx="14" cy="9" r="2.500" fill="#4db455" /><circle cx="7" cy="15" r="2.500" fill="#e44" /><circle cx="8" cy="21" r="2.500" fill="#c33" /><circle cx="20" cy="10" r="2.300" fill="#f3a32a" /><circle cx="13" cy="24" r="2.500" fill="#f4cf31" /><path d="M25 12l3 1-5 18-2 1z" fill="#e88b30" /><path d="M25 12c0-5 3-9 6-11 1 4 0 9-3 12z" fill="#b9854d" /></svg>
  );
  return (
    <svg width="32" height="28" viewBox="0 0 32 28">
      <rect x="2" y="2" width="28" height="24" fill="#e8f4fb" />
      <rect x="4" y="4" width="24" height="20" fill="#2f86d2" />
      <ellipse cx="13" cy="12" rx="9" ry="3" fill="#fff" />
      <ellipse cx="21" cy="10" rx="7" ry="3" fill="#d6edfa" />
      <rect x="4" y="15" width="24" height="4" fill="#2d5d66" />
      <rect x="4" y="19" width="24" height="5" fill="#8cc6e4" />
      <path d="M1 6V1h6M25 1h6v5M31 22v5h-6M7 27H1v-5" fill="none" stroke="#1c65ab" strokeWidth="2" />
    </svg>
  );
}

function Taskbar() {
  return (
    <div className="flex h-10 shrink-0 border-t border-[#26303f] bg-[linear-gradient(90deg,#8396ad_0px,#8396ad_50px,#a6bfdc_110px,#a8c1de_1655px,#8396ad_1700px)] text-white shadow-[inset_0_1px_0_#c9d9ea]">
      <div className="ml-[8px] mt-px flex h-[37px] w-[37px] shrink-0 items-center justify-center rounded-full border border-[#27466b] bg-[radial-gradient(circle_at_50%_90%,#5ed1f2,#23679f_50%,#3a648f_80%)]">
        <svg width="27" height="25" viewBox="0 0 27 25"><path d="M3 5c4-3 7-2 10-1l-2 8c-4-2-7-1-10 0z" fill="#ee5a25" /><path d="M14 4.500c4 2 7 2 11 0l-2 8c-4 2-7 1-11 0z" fill="#8dc63f" /><path d="M1 13c3-1 6-2 10 0l-2 8c-4-2-6-1-9 0z" fill="#4cabe4" transform="translate(1)" /><path d="M12 13.500c3 2 7 2 11 0l-2 8c-4 2-7 2-11 0z" fill="#fdcb2e" /></svg>
      </div>
      <svg width="30" height="28" viewBox="0 0 30 28" className="ml-[30px] mt-[6px] shrink-0"><path d="M7 1h18v24H7z" fill="#8fc3e4" stroke="#5c9ac4" /><path d="M2 2h18v22H2z" fill="#cde7f5" stroke="#6da8cf" /><circle cx="11" cy="14" r="8.500" fill="#ee7a1c" /><path d="M8 9l8 5-8 5z" fill="#fff" /></svg>
      <div className="ml-[16px] flex">
        {apps.map(([gap, width, stack, lit, name]) => (
          <div key={name} className="flex" style={{ marginLeft: gap }}>
            <div className={`flex items-center justify-center rounded-[3px] border border-[#4f6179] pb-[2px] shadow-[inset_0_0_0_1px_#dce8f4] ${lit ? "bg-linear-to-br from-[#eaf1f8] to-[#bdd0e5]" : "bg-linear-to-br from-[#cddbeb] to-[#a7bfda]"}`} style={{ width }}>
              <AppIcon name={name} />
            </div>
            {stack > 0 && <span className="w-1 rounded-r-[3px] border-y border-r border-[#4f6179] bg-[#c5d5e7]" />}
            {stack > 1 && <span className="w-1 rounded-r-[3px] border-y border-r border-[#4f6179] bg-[#c5d5e7]" />}
          </div>
        ))}
      </div>
      <div className="ml-auto flex items-center text-[12px]">
        <T w={16} className="-mt-1">RU</T>
        <svg width="9" height="6" viewBox="0 0 9 6" className="ml-[15px] mt-0.5"><path d="M4.500 0L9 5.500H0z" fill="#fff" stroke="#46566c" strokeWidth=".6" /></svg>
        <svg width="17" height="17" viewBox="0 0 17 17" className="ml-[12px] mt-0.5" fill="#fff" stroke="#3e4a5b" strokeWidth=".8"><path d="M1 1h2v15H1zM3 2c3-1 4 0 6 1v2c3 1 4 0 7 0-1 3-3 5-6 4-3-2-4-1-7-1z" /></svg>
        <svg width="18" height="17" viewBox="0 0 18 17" className="ml-[7px] mt-0.5" fill="#5f7289"><path d="M5 4h11v9H5zM8 16h8" stroke="#3e4a5b" strokeWidth="3" /><path d="M5 4h11v9H5zM8 16h8" stroke="#fff" strokeWidth="1.500" /><path d="M1 1v5h4V1M3 6v9h4" fill="none" stroke="#fff" strokeWidth="1.500" /></svg>
        <svg width="17" height="16" viewBox="0 0 17 16" className="ml-[7px] mt-0.5" fill="#fff"><path d="M1 5h3l4-4v14l-4-4H1z" stroke="#3e4a5b" strokeWidth=".8" /><path d="M10 5c2 2 2 4 0 6M12 3c3 3 3 7 0 10M14 1c4 4 4 10 0 14" fill="none" stroke="#fff" strokeWidth="1.200" /></svg>
        <div className="ml-[17px] flex flex-col items-center leading-[17px]">
          <T w={27}>12:44</T>
          <T w={54}>01.10.2019</T>
        </div>
        <div className="ml-[11px] h-[38px] w-[14px] border border-[#c3d0df] bg-linear-to-br from-[#4a5c72] to-[#8799af] outline outline-[#3d4b5e]" />
        <div className="w-px" />
      </div>
    </div>
  );
}

export default function App() {
  return (
    <div className="flex h-[1080px] w-[1920px] flex-col overflow-hidden bg-white font-['Open_Sans','Noto_Sans',sans-serif]">
      <TopBar />
      <Toolbars />
      <div className="flex h-[928px] shrink-0 overflow-hidden">
        <div className="ml-[339px] flex w-[1224px] shrink-0 flex-col bg-[#fafafa] font-['DejaVu_Sans_Condensed','DejaVu_Sans',sans-serif] shadow-[0_0_20px_#b8b8b8]">
          <SiteHeader />
          <Content />
          <Footer />
        </div>
        <Scrollbar />
      </div>
      <Taskbar />
    </div>
  );
}
